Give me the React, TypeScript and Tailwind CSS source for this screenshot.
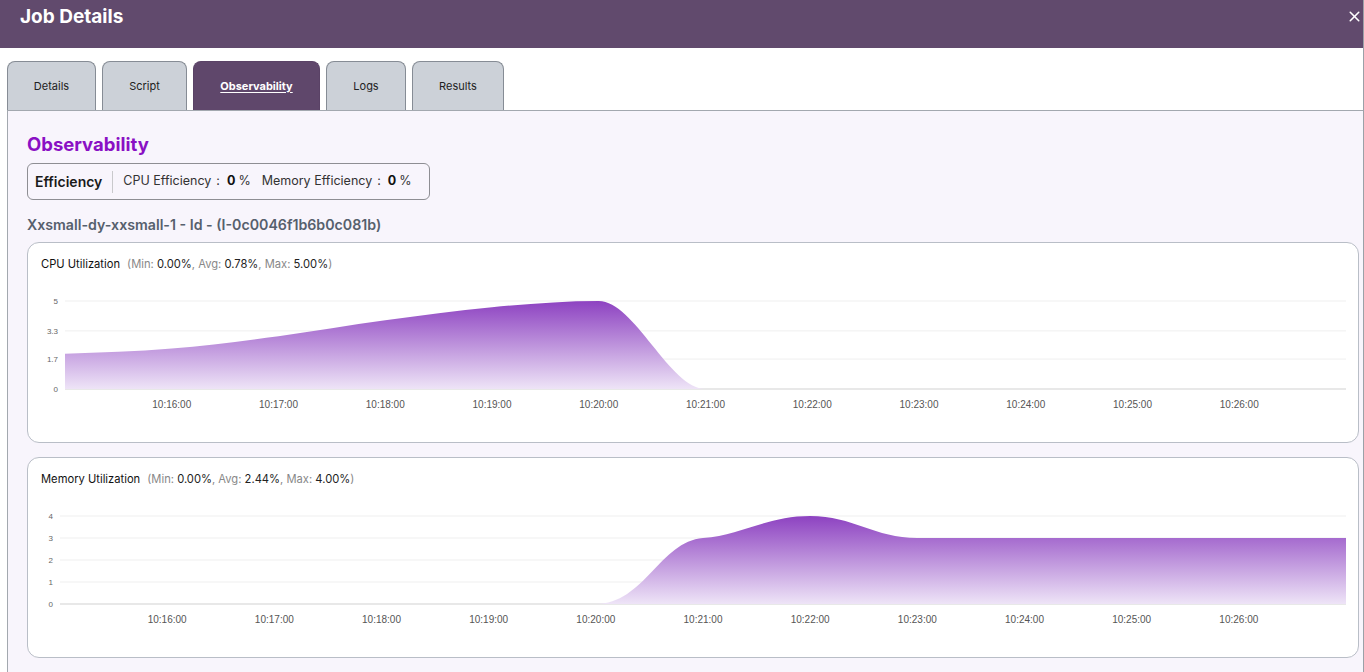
import { X } from "lucide-react";

type Point = [number, number];

// monotone cubic (same idea as d3 curveMonotoneX), in pixel space
function monotonePath(pts: Point[]): string {
  const n = pts.length;
  if (n < 2) return "";
  const sign = (v: number) => (v < 0 ? -1 : 1);
  const t: number[] = new Array(n).fill(0);
  for (let i = 1; i < n - 1; i++) {
    const h0 = pts[i][0] - pts[i - 1][0];
    const h1 = pts[i + 1][0] - pts[i][0];
    const s0 = (pts[i][1] - pts[i - 1][1]) / h0;
    const s1 = (pts[i + 1][1] - pts[i][1]) / h1;
    const p = (s0 * h1 + s1 * h0) / (h0 + h1);
    t[i] = (sign(s0) + sign(s1)) * Math.min(Math.abs(s0), Math.abs(s1), 0.5 * Math.abs(p)) || 0;
  }
  const hA = pts[1][0] - pts[0][0];
  t[0] = (3 * (pts[1][1] - pts[0][1]) / hA - t[1]) / 2;
  const hB = pts[n - 1][0] - pts[n - 2][0];
  t[n - 1] = (3 * (pts[n - 1][1] - pts[n - 2][1]) / hB - t[n - 2]) / 2;

  let d = `M${pts[0][0]},${pts[0][1]}`;
  for (let i = 0; i < n - 1; i++) {
    const [x0, y0] = pts[i];
    const [x1, y1] = pts[i + 1];
    const dx = (x1 - x0) / 3;
    d += ` C${x0 + dx},${y0 + dx * t[i]} ${x1 - dx},${y1 - dx * t[i + 1]} ${x1},${y1}`;
  }
  return d;
}

const TIMES = ["10:16:00", "10:17:00", "10:18:00", "10:19:00", "10:20:00", "10:21:00", "10:22:00", "10:23:00", "10:24:00", "10:25:00", "10:26:00"];

// a cubic segment in chart units: [c1m, c1v, c2m, c2v, m, v]
type Seg = [number, number, number, number, number, number];

interface ChartProps {
  id: string;
  left: number;
  max: number;
  ticks: { v: number; label: string }[];
  data?: Point[]; // [minutes after 10:15, value]
  start?: Point;
  segs?: Seg[];
}

function AreaChart({ id, left, max, ticks, data, start, segs }: ChartProps) {
  const right = 1318;
  const top = 30;
  const bottom = 118;
  const step = (right - left) / 12;
  const y = (v: number) => bottom - (v / max) * (bottom - top);
  const x = (m: number) => left + m * step;

  let line = "";
  if (data) {
    line = monotonePath(data.map(([m, v]) => [x(m), y(v)] as Point));
  } else if (start && segs) {
    line = `M${x(start[0])},${y(start[1])}`;
    for (const s of segs) {
      line += ` C${x(s[0])},${y(s[1])} ${x(s[2])},${y(s[3])} ${x(s[4])},${y(s[5])}`;
    }
  }
  const area = `${line} L${right},${bottom} L${left},${bottom} Z`;

  return (
    <svg width={1329} height={150} className="block">
      <defs>
        <linearGradient id={id} x1="0" y1={top} x2="0" y2={bottom} gradientUnits="userSpaceOnUse">
          <stop offset="0" stopColor="#8d42c1" />
          <stop offset="1" stopColor="#eee4f7" />
        </linearGradient>
      </defs>
      {ticks.map((t) => (
        <g key={t.label}>
          <line
            x1={left}
            x2={right}
            y1={y(t.v)}
            y2={y(t.v)}
            stroke={t.v === 0 ? "#e0e0e0" : "#efefef"}
            strokeWidth={t.v === 0 ? 1.5 : 1}
          />
          <text
            x={left - 7}
            y={y(t.v) + 3}
            textAnchor="end"
            fontSize={8}
            fill="#666"
            fontFamily="'Liberation Sans', Arial, sans-serif"
          >
            {t.label}
          </text>
        </g>
      ))}
      <path d={area} fill={`url(#${id})`} />
      {TIMES.map((label, i) => (
        <text
          key={label}
          x={x(i + 1)}
          y={137}
          textAnchor="middle"
          fontSize={10}
          fill="#555"
          fontFamily="'Liberation Sans', Arial, sans-serif"
        >
          {label}
        </text>
      ))}
    </svg>
  );
}

function Stat({ label, value }: { label: string; value: string }) {
  return (
    <>
      <span className="text-[#888]">{label}: </span>
      <span className="text-[#222]">{value}</span>
    </>
  );
}

function ChartCard({
  title,
  min,
  avg,
  max,
  children,
}: {
  title: string;
  min: string;
  avg: string;
  max: string;
  children: React.ReactNode;
}) {
  return (
    <div className="h-[201px] rounded-xl border border-[#b9bec7] bg-white">
      <div className="pt-[14px] pl-[13px] text-[11.2px] leading-[14px] text-[#111]">
        {title}
        <span className="ml-[7px] text-[#888]">(</span>
        <Stat label="Min" value={min} />
        <span className="text-[#888]">, </span>
        <Stat label="Avg" value={avg} />
        <span className="text-[#888]">, </span>
        <Stat label="Max" value={max} />
        <span className="text-[#888]">)</span>
      </div>
      {children}
    </div>
  );
}

const TABS = [
  { label: "Details", w: "w-[89px]" },
  { label: "Script", w: "w-[85px]" },
  { label: "Observability", w: "w-[127px]", active: true },
  { label: "Logs", w: "w-[80px]" },
  { label: "Results", w: "w-[92px]" },
];

export default function App() {
  return (
    <div className="h-[672px] w-full overflow-hidden border-r border-[#9ba1a8] bg-white font-['Inter',sans-serif]">
      {/* Header */}
      <div className="flex h-12 items-start justify-between bg-[#614a6d] pl-5 pr-0">
        <h2 className="pt-[5px] text-[19px] font-bold leading-6 text-white">Job Details</h2>
        <button className="mt-[8px] text-white">
          <X className="h-[17px] w-[17px]" strokeWidth={2.2} />
        </button>
      </div>

      {/* Tabs */}
      <div className="flex gap-[6px] pl-[7px] pt-[13px]">
        {TABS.map((t) => (
          <div
            key={t.label}
            className={`flex h-[49px] items-center justify-center rounded-t-lg border border-b-0 text-[11px] ${t.w} ${
              t.active
                ? "border-[#5a4266] bg-[#5f476b] font-bold text-white underline underline-offset-2"
                : "border-[#868c95] bg-[#ccd1d8] text-[#222]"
            }`}
          >
            {t.label}
          </div>
        ))}
      </div>

      {/* Content */}
      <div className="ml-[7px] h-full border-l border-t border-[#a3a8af] bg-[#f8f5fc] pl-[19px] pr-[4px]">
        <h3 className="pt-[22px] text-[18.5px] font-bold leading-[22px] text-[#8a10c4]">Observability</h3>

        <div className="mt-[8px] flex h-[37px] w-[403px] items-center rounded-md border border-[#8e8e93] pl-[7px] text-[12.5px] text-[#333]">
          <span className="text-[14px] font-semibold text-[#1a1a1a]">Efficiency</span>
          <span className="mx-[10px] h-[22px] w-px bg-[#c9c9cc]" />
          <span>CPU Efficiency</span>
          <span className="ml-[5px]">:</span>
          <span className="ml-[7px] font-bold text-[#111]">0</span>
          <span className="ml-[3px]">%</span>
          <span className="ml-[11px]">Memory Efficiency</span>
          <span className="ml-[5px]">:</span>
          <span className="ml-[7px] font-bold text-[#111]">0</span>
          <span className="ml-[3px]">%</span>
        </div>

        <div className="mt-[16px] text-[14.2px] font-semibold leading-[18px] text-[#56606d]">
          Xxsmall-dy-xxsmall-1 - Id - (I-0c0046f1b6b0c081b)
        </div>

        <div className="mt-[8px] flex flex-col gap-[14px]">
          <ChartCard title="CPU Utilization" min="0.00%" avg="0.78%" max="5.00%">
            <AreaChart
              id="cpuGrad"
              left={37}
              max={5}
              ticks={[
                { v: 0, label: "0" },
                { v: 1.7, label: "1.7" },
                { v: 3.3, label: "3.3" },
                { v: 5, label: "5" },
              ]}
              data={[
                [0, 2],
                [1, 2.3],
                [2, 3.0],
                [3, 3.9],
                [4, 4.65],
                [5, 5],
                [6, 0],
                [12, 0],
              ]}
            />
          </ChartCard>
          <ChartCard title="Memory Utilization" min="0.00%" avg="2.44%" max="4.00%">
            <AreaChart
              id="memGrad"
              left={32}
              max={4}
              ticks={[
                { v: 0, label: "0" },
                { v: 1, label: "1" },
                { v: 2, label: "2" },
                { v: 3, label: "3" },
                { v: 4, label: "4" },
              ]}
              start={[0, 0]}
              segs={[
                [2, 0, 3, 0, 5, 0],
                [5.45, 0, 5.6, 2.85, 6, 3],
                [6.35, 3.12, 6.6, 4, 7, 4],
                [7.4, 4, 7.6, 3, 8, 3],
                [9, 3, 11, 3, 12, 3],
              ]}
            />
          </ChartCard>
        </div>
      </div>
    </div>
  );
}
